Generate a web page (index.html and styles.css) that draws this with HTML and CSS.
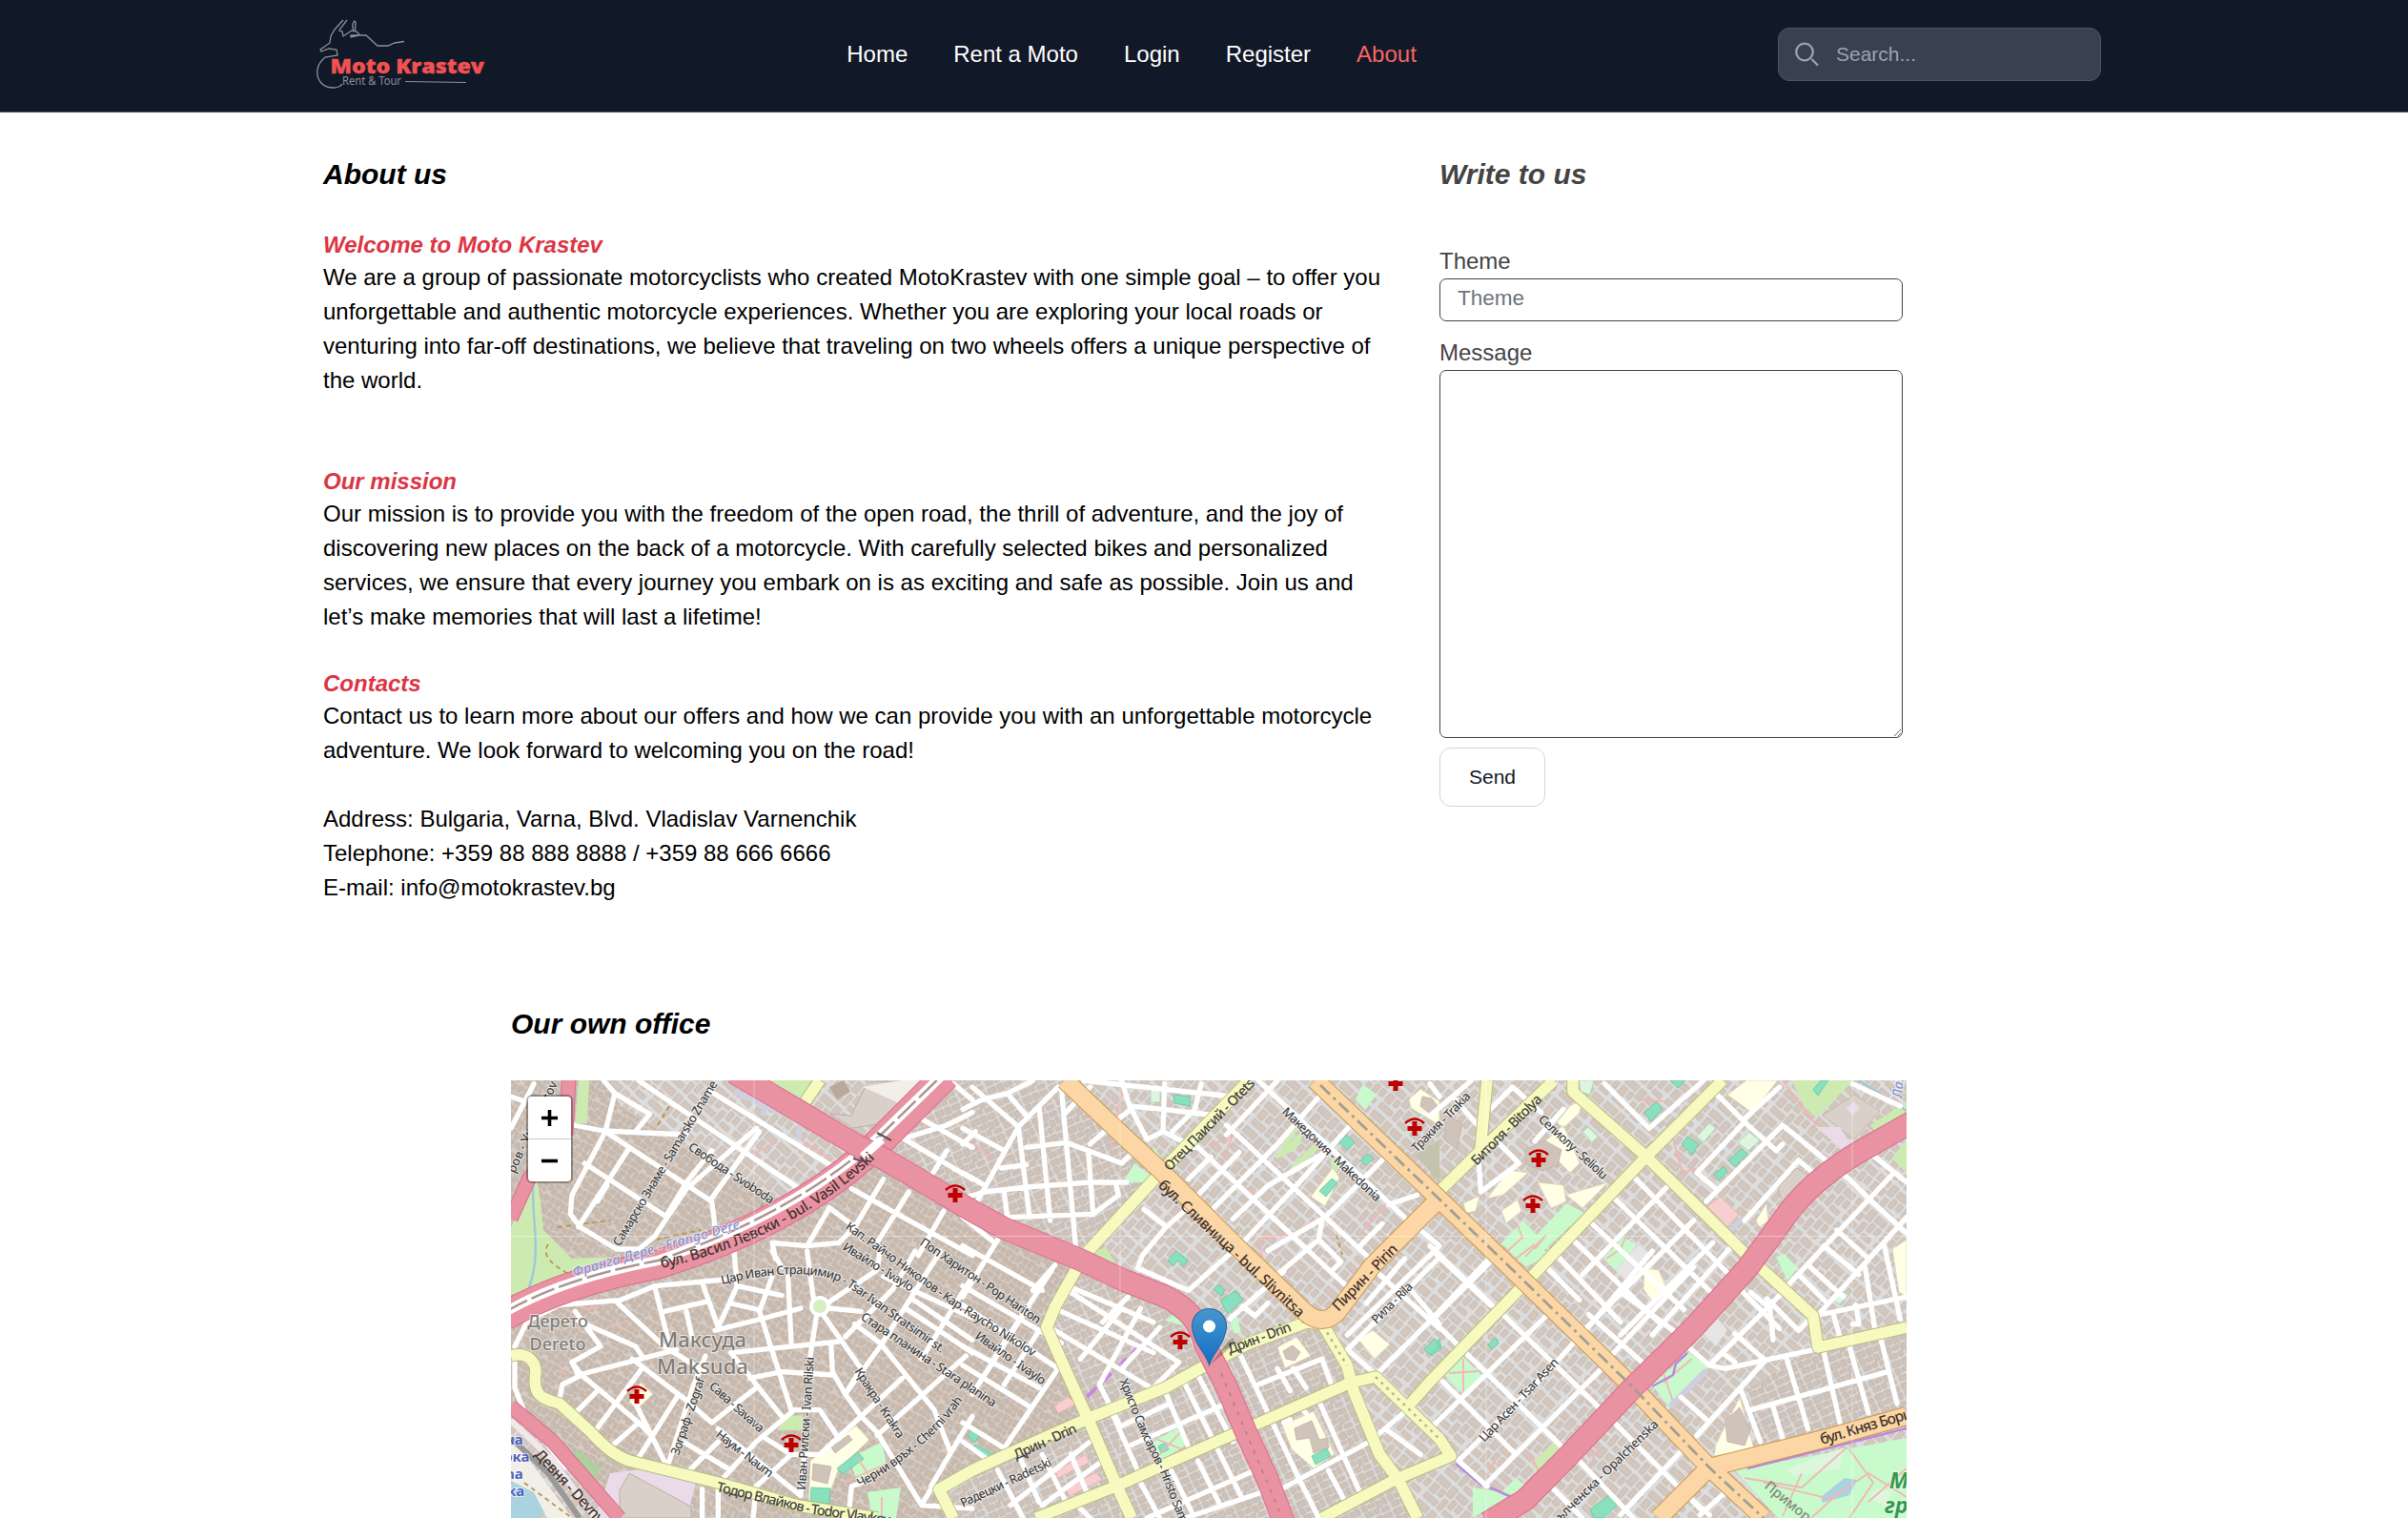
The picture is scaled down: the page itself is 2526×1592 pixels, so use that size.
FILE: index.html
```html
<!DOCTYPE html>
<html lang="en">
<head>
<meta charset="utf-8">
<title>Moto Krastev - About</title>
<link rel="stylesheet" href="styles.css">
</head>
<body>
<header class="header">
  <div class="header-inner">
    <a class="logo" aria-label="Moto Krastev">
      <svg width="180" height="84" viewBox="329 15 180 84">
        <g fill="none" stroke="#8d9096" stroke-width="1.3">
          <path d="M360 21L351 31L347 38L346 45L336 52L337 54L345 51L353 52L354 58L341 60L340 61C334 66 332 72 333 79C335 88 342 92 350 92C354 92 358 90 359 88"/>
          <path d="M364 21L357 30L356 32L359 33L360 38L366 34L369 32L374 33L376 35L377 37L368 39L368 37L384 37L396 48L407 48L414 45L424 43.500"/>
          <path d="M371 32C369 28 370 23 372 22C375 24 371 29 373 32"/>
          <path d="M425 85.500L489 86.500" stroke-width="1.200"/>
        </g>
        <text class="logo-name" x="346.500" y="76.500" textLength="161.500" lengthAdjust="spacingAndGlyphs">Moto Krastev</text>
        <text class="logo-sub" x="359" y="89" textLength="62" lengthAdjust="spacingAndGlyphs">Rent &amp; Tour</text>
      </svg>
    </a>
    <nav class="nav"><a>Home</a><a>Rent a Moto</a><a>Login</a><a>Register</a><a class="active">About</a></nav>
    <div class="search">
      <svg width="26" height="26" viewBox="0 0 26 26" fill="none" stroke="#9ca3af" stroke-width="2.200"><circle cx="10" cy="10.500" r="8.800"/><path d="M17.500 18L24 24.500"/></svg>
      <span>Search...</span>
    </div>
  </div>
</header>
<main>
  <div class="columns">
    <section class="about">
      <h2>About us</h2>
      <h3>Welcome to Moto Krastev</h3>
      <p>We are a group of passionate motorcyclists who created MotoKrastev with one simple goal – to offer you<br>unforgettable and authentic motorcycle experiences. Whether you are exploring your local roads or<br>venturing into far-off destinations, we believe that traveling on two wheels offers a unique perspective of<br>the world.</p>
      <h3 class="mission">Our mission</h3>
      <p>Our mission is to provide you with the freedom of the open road, the thrill of adventure, and the joy of<br>discovering new places on the back of a motorcycle. With carefully selected bikes and personalized<br>services, we ensure that every journey you embark on is as exciting and safe as possible. Join us and<br>let’s make memories that will last a lifetime!</p>
      <h3 class="contacts">Contacts</h3>
      <p>Contact us to learn more about our offers and how we can provide you with an unforgettable motorcycle<br>adventure. We look forward to welcoming you on the road!<br><br>Address: Bulgaria, Varna, Blvd. Vladislav Varnenchik<br>Telephone: +359 88 888 8888 / +359 88 666 6666<br>E-mail: info@motokrastev.bg</p>
    </section>
    <form class="write">
      <h2>Write to us</h2>
      <label for="theme">Theme</label>
      <input id="theme" type="text" placeholder="Theme">
      <label for="message">Message</label>
      <textarea id="message"></textarea>
      <button type="button">Send</button>
    </form>
  </div>
  <section class="office">
    <h2>Our own office</h2>
    <div class="map">
      <svg class="map-canvas" width="1464" height="459" viewBox="536 1133 1464 459">
        <defs>
          <pattern id="dense" width="26" height="22" patternUnits="userSpaceOnUse" patternTransform="rotate(28)">
            <rect width="26" height="22" fill="#d6cdc6"/>
            <path d="M1 1h6v4h-2v3H1zM9 1h4v5H9zM15 0h6v3h-2v4h-4zM22 2h3v7h-3zM1 11h4v6H1zM7 8h6v4H7zM15 9h4v5h-4zM20 11h5v4h-5zM6 14h5v6H6zM13 16h7v4h-7zM22 17h3v4h-3z" fill="#c9baae" stroke="#c0b0a4" stroke-width=".8"/>
          </pattern>
          <pattern id="grid45" width="44" height="34" patternUnits="userSpaceOnUse" patternTransform="rotate(42)">
            <rect width="44" height="34" fill="#dddddd"/>
            <path d="M2 2h15v7H2zM20 2h7v12h-7zM30 3h12v7H30zM3 12h7v10H3zM13 12h5v8h-5zM30 13h5v10h-5zM38 13h5v8h-5zM3 25h16v6H3zM22 18h5v13h-5zM30 27h11v5H30z" fill="#d3c7be" stroke="#c4b6ab" stroke-width=".8"/>
          </pattern>
          <pattern id="grid20" width="30" height="24" patternUnits="userSpaceOnUse" patternTransform="rotate(-24)">
            <rect width="30" height="24" fill="#dbd9d7"/>
            <path d="M1 1h9v6H1zM12 1h6v7h-6zM20 2h8v5h-8zM1 9h5v6H1zM8 10h7v4H8zM17 10h5v7h-5zM24 9h4v7h-4zM2 17h8v5H2zM12 17h5v5h-5zM20 19h8v4h-8z" fill="#cfc2b8" stroke="#c2b3a8" stroke-width=".8"/>
          </pattern>
          <linearGradient id="pin" x1="0" y1="0" x2="0" y2="1"><stop offset="0" stop-color="#4796cd"/><stop offset="1" stop-color="#126fc6"/></linearGradient>
          <g id="hospital"><path d="M-10 -5Q0 -14 10 -5" fill="none" stroke="#bf0000" stroke-width="2.400"/><path d="M-2.500 -7h5v5h5v5h-5v5h-5v-5h-5v-5h5z" fill="#bf0000"/></g>
        </defs>

        <!-- ground -->
        <rect x="536" y="1133" width="1464" height="459" fill="url(#grid45)"/>
        <path d="M536 1133H760L890 1205L820 1268L700 1310L600 1340L536 1360Z" fill="url(#dense)"/>
        <path d="M640 1133H775L900 1215L830 1265L740 1215L650 1160Z" fill="url(#grid45)"/>
        <path d="M536 1375L700 1335L830 1280L930 1215L1010 1268L1130 1320L1098 1392L1143 1490L990 1560L1000 1592H640L536 1475Z" fill="url(#dense)"/>
        <path d="M960 1133H1117L1215 1240L1135 1320L1010 1265L935 1205Z" fill="url(#grid20)"/>
        <path d="M1135 1320L1250 1375L1270 1430L1143 1487L1098 1392ZM1143 1487L1270 1430L1340 1592H1187ZM1010 1550L1143 1490L1187 1592H990ZM1285 1415L1387 1388L1487 1592H1350Z" fill="url(#grid20)"/>
        <path d="M1905 1412L2000 1392V1490L1850 1525L1830 1460Z" fill="url(#grid20)"/>

        <!-- land use -->
        <g fill="#cdebb0">
          <path d="M536 1287L563 1235L567 1260L570 1290L600 1320L640 1318L600 1334L536 1358Z"/>
          <path d="M607 1133H618L616 1178H603Z"/><path d="M800 1133H850L842 1152Z"/>
          <path d="M590 1532L605 1520L630 1540L625 1550L640 1592L600 1545Z" fill="#add19e"/>
          <path d="M815 1500L826 1485L842 1484V1500Z"/><path d="M1350 1190L1366 1178L1340 1215ZM1337 1213L1372 1180L1360 1205L1340 1215Z"/>
          <path d="M1353 1225L1378 1200L1383 1205L1358 1229ZM1395 1213L1408 1222L1398 1232ZM1140 1318L1160 1308L1170 1325L1150 1335Z"/>
          <path d="M1880 1133L1945 1133L1905 1172L1892 1160ZM1962 1180L2000 1155V1166L1970 1190ZM1985 1215L2000 1195V1230Z"/>
          <path d="M1610 1532L1630 1512L1635 1522L1610 1545Z"/>
        </g>
        <g fill="#c8facc">
          <path d="M1422 1153L1430 1137L1444 1148L1432 1164ZM1178 1240L1190 1220L1210 1235L1198 1240ZM1208 1200L1217 1212L1214 1218Z"/>
          <path d="M1575 1304L1598 1280L1612 1295L1643 1262L1662 1272L1602 1328Z"/><path d="M1682 1320L1703 1297L1717 1306L1695 1332Z"/>
          <path d="M1863 1318L1872 1315L1886 1330L1875 1343Z"/><path d="M1515 1442L1535 1423L1556 1444L1535 1462Z"/>
          <path d="M1733 1452L1772 1418L1792 1434L1750 1475Z"/><path d="M1820 1542L2000 1508V1592H1865Z"/>
          <path d="M1210 1512L1235 1498L1245 1515L1215 1534Z"/><path d="M1583 1312L1640 1312L1600 1328Z"/>
          <path d="M1222 1385L1230 1380L1250 1388L1240 1390ZM1290 1385L1298 1382L1302 1398L1294 1398Z"/>
          <path d="M890 1530L925 1512L930 1535L900 1555ZM910 1565L945 1560L940 1592H915Z"/>
          <path d="M1545 1560L1575 1565L1590 1550L1600 1558L1545 1592Z"/>
        </g>
        <g fill="#ffffe5" stroke="#d9cfb2" stroke-width=".7">
          <path d="M1478 1153L1490 1142L1510 1155V1180L1480 1162Z"/><path d="M1812 1148L1832 1133H1865L1838 1167Z"/>
          <path d="M1375 1255L1398 1225L1405 1235L1390 1265Z"/><path d="M1340 1413L1360 1402L1375 1422L1348 1435Z"/>
          <path d="M1345 1495L1378 1480L1400 1525L1378 1540L1355 1520Z"/><path d="M850 1532L898 1495L912 1510L880 1540L865 1580L848 1580Z"/>
          <path d="M660 1470L672 1450L685 1462L668 1478Z"/>
          <path d="M1583 1227L1603 1230L1577 1253L1560 1257ZM1613 1240L1640 1243L1643 1260L1627 1267ZM1633 1177L1647 1160L1660 1153L1657 1167L1640 1183ZM1643 1253L1687 1240L1660 1267ZM1617 1200L1640 1180L1657 1220L1647 1230ZM1535 1262L1552 1254L1548 1270L1538 1272ZM1575 1270L1592 1258L1596 1270L1580 1283Z"/>
          <path d="M1725 1330L1740 1332L1748 1350L1735 1367L1724 1352Z"/><path d="M1800 1515L1825 1465L1840 1520L1798 1527Z"/>
          <path d="M1985 1310L2000 1300V1360L1992 1355Z"/><path d="M1425 1405L1440 1395L1458 1410L1442 1425Z"/><path d="M1842 1280L1853 1262L1855 1280L1846 1287Z"/>
        </g>
        <g fill="#d0c3b9" stroke="#bfb0a5" stroke-width=".8">
          <path d="M1346 1417L1356 1411L1364 1418L1358 1427L1349 1425ZM1358 1498L1376 1490L1384 1510L1392 1508L1394 1518L1378 1524L1374 1508L1360 1510ZM1825 1476L1836 1500L1830 1516L1812 1512L1810 1490ZM1492 1150L1502 1152L1508 1160L1500 1168L1490 1160ZM1600 1206L1620 1196L1638 1206L1634 1222L1618 1228L1600 1220ZM872 1518L890 1505L894 1510L876 1524ZM853 1535L872 1538L868 1556L852 1552ZM1516 1170L1534 1178L1528 1206L1516 1194Z"/>
        </g>
        <path d="M625 1592L640 1545L680 1540L730 1555L720 1592Z" fill="#ebdbe8"/>
        <path d="M650 1563L660 1545L725 1580V1592H650Z" fill="#d9d0c9" stroke="#bfb0a5"/>
        <path d="M893 1170L910 1135L985 1133L925 1178L895 1183L870 1168Z" fill="#d9d0c9" stroke="#bfb0a5"/>
        <path d="M905 1140L945 1133H980L950 1160Z" fill="#f2efe9"/>
        <path d="M870 1140L885 1133L892 1145L878 1153Z" fill="#b9a99c"/>
        <path d="M1865 1245L1885 1225L1907 1240L1872 1270Z" fill="#d9d0c9" stroke="#c5b8ad"/>
        <path d="M1912 1170L1945 1148L1972 1165L1945 1195Z" fill="#d9d0c9" stroke="#c5b8ad"/>
        <path d="M1905 1182L1930 1182L1940 1198L1932 1205ZM1937 1162L1945 1155L1951 1163L1943 1170Z" fill="#ebdbe8"/>
        <path d="M1485 1212L1510 1195V1240Z" fill="#c4c3ad"/>
        <path d="M1695 1332L1718 1306L1732 1316L1704 1342ZM1780 1392L1795 1375L1812 1395L1800 1412Z" fill="#e6e6e6"/>
        <path d="M536 1555L562 1558L573 1582L565 1592H536Z" fill="#aad3df"/>
        <path d="M536 1505L600 1592H574L560 1565L536 1553Z" fill="#f2efe9"/>
        <path d="M1910 1570L1935 1550L1948 1552L1940 1568L1912 1576Z" fill="#aad3df"/>
        <path d="M1875 1540L1935 1518L1930 1540L1880 1548ZM1960 1570L1972 1560L1985 1565L1978 1580Z" fill="#def6de"/>
        <g fill="#f7cfcf" stroke="#e8b5b5"><path d="M1107 1542L1140 1525L1142 1534L1110 1550ZM1117 1560L1150 1544L1156 1552L1122 1569ZM1106 1475L1120 1465L1130 1472L1110 1482Z"/><path d="M1791 1265L1805 1255L1824 1274L1812 1287Z"/></g>
        <g fill="#88e0be" stroke="#63c79d" stroke-width=".8">
          <path d="M1231 1148L1248 1150L1249 1160L1232 1157ZM1405 1198L1413 1190L1421 1198L1413 1206ZM1384 1249L1397 1236L1403 1240L1391 1255ZM1427 1217L1435 1210L1441 1215L1433 1222Z"/>
          <path d="M1225 1322L1234 1312L1246 1321L1242 1328L1235 1322L1231 1328ZM1280 1364L1296 1354L1304 1363L1288 1378ZM1273 1352L1278 1347L1285 1353L1281 1359Z"/>
          <path d="M1725 1167L1738 1155L1744 1163L1732 1176ZM1764 1200L1770 1192L1782 1200L1775 1211ZM1813 1217L1827 1205L1833 1210L1820 1224ZM1798 1232L1808 1223L1812 1229L1803 1238Z"/>
          <path d="M1902 1143L1910 1133H1918L1907 1149ZM1752 1133H1768L1760 1141ZM1500 1415L1510 1404L1512 1414L1502 1422ZM1561 1410L1569 1403L1572 1409L1565 1415Z"/>
          <path d="M1376 1527L1392 1519L1396 1527L1380 1536ZM1494 1415L1505 1404L1510 1412L1500 1421ZM1668 1583L1688 1568L1697 1578L1682 1592H1672Z"/>
          <path d="M878 1540L900 1523L906 1530L884 1546ZM851 1560L871 1561L870 1577L850 1575ZM1015 1505L1024 1496L1030 1502L1022 1513ZM1023 1515L1041 1525L1037 1529L1021 1518ZM1215 1517L1222 1513L1226 1520L1218 1524Z"/>
        </g>
        <g fill="#def6de" stroke="#9ed8b5" stroke-width=".8"><path d="M1207 1141L1217 1140V1156H1207ZM1823 1198L1835 1187L1846 1196L1834 1207ZM1780 1192L1793 1178L1800 1183L1787 1198ZM1660 1187L1666 1182L1676 1192L1670 1198ZM1656 1133H1672L1668 1148L1658 1145ZM1923 1363L1932 1354L1939 1358L1930 1368Z"/></g>
        <g fill="none" stroke="#f4b5b5" stroke-width="1.800">
          <path d="M1580 1313L1597 1298L1592 1285M1600 1318L1622 1295L1610 1310M1590 1320L1610 1305M1685 1320L1700 1310L1705 1298M1520 1440L1550 1438M1535 1425V1460M1212 1530L1240 1500M1215 1510L1245 1522M1745 1450L1775 1425M1745 1440L1755 1470"/>
          <path d="M1830 1550L1890 1560L1935 1520M1850 1555L1920 1572L1960 1545L2000 1570M1890 1545L1870 1590M1940 1520L1965 1555L1940 1592M1960 1575L2000 1540M1900 1592L1930 1565"/>
          <path d="M1268 1202L1292 1192L1283 1218M1378 1280L1360 1292L1320 1300L1325 1325M1430 1290L1455 1262M1755 1195L1765 1230L1780 1225M1720 1153L1745 1155M1870 1133L1905 1180M885 1555L930 1535M900 1530L920 1560M925 1570V1592M1320 1255L1305 1245M1022 1200L1040 1215M640 1392L660 1385M585 1437L595 1442M613 1373L628 1371"/>
          <path d="M1562 1545L1567 1533L1575 1540M1605 1525L1615 1545L1600 1555M1670 1530L1680 1515M1685 1455L1692 1450M1165 1205L1180 1130M790 1210L815 1198M840 1195L870 1215"/>
        </g>
        <path d="M560 1235C555 1270 570 1310 555 1350M604 1140L600 1180M1950 1133L2000 1165" fill="none" stroke="#9fc9d8" stroke-width="2.500"/>
        <path d="M770 1145L905 1205M801 1158V1170M838 1180V1195M1815 1290L1830 1277M1752 1475L1790 1437" fill="none" stroke="#cfcfdf" stroke-width="6"/>
        <path d="M1140 1465L1213 1395" fill="none" stroke="#c987e2" stroke-width="4" stroke-dasharray="14 8"/>
        <path d="M1733 1454L1755 1442L1758 1430L1770 1419M1833 1540L2000 1498M1527 1535L1555 1558M1563 1560L1590 1572" fill="none" stroke="#b98ae0" stroke-width="2.500"/>
        <path d="M575 1305C565 1320 590 1332 600 1338M585 1287L640 1280M680 1302L735 1290M690 1180L705 1155M795 1275L803 1255M550 1555L600 1592M1402 1295L1408 1316" fill="none" stroke="#b8954c" stroke-width="1.800" stroke-dasharray="5 4"/>

        <!-- residential streets, one group per map quarter -->
        <g class="streets" transform="translate(520 1040) scale(.33333)">
          <path d="M48 430L120 290M48 330L90 345M245 420L340 438L600 450M340 280L375 320L485 385L440 440M375 320L345 440L240 640L235 700L265 740L380 810L450 810L500 770L600 620L820 430M450 280L970 630M670 310L1060 550L1080 530M345 440L680 660L690 740M415 500L260 740M280 540L540 710M320 660L350 610M540 700L600 600L680 500M680 650L830 440"/>
          <path d="M1500 380L1420 420L1290 460M1340 400L1500 490M1280 460L1500 590M1420 500L1370 580M1440 290L1500 340M1120 620L1500 830M1220 590L1130 740M1300 630L1200 790M1410 690L1330 830M1050 680L1130 740L1080 790L980 800L870 790L880 840M1050 680L980 800"/>
        </g>
        <g class="streets" transform="translate(1010 1120) scale(.33333)">
          <path d="M0 130L60 100L140 80L220 40M30 60L175 185L40 430M140 80L200 150M0 190L130 260M0 240L40 200M300 60L175 185L210 470M240 120L275 480M310 60L325 230L355 560M120 315L200 305M200 250L325 235L395 260L500 300M395 260L410 460M0 410L70 390L200 375L400 360L515 360M480 360L490 400L410 460L140 470L130 390M0 330L70 370M325 140L400 60M400 240L480 170M500 40L525 120L580 225L630 200L635 50M380 40L850 90M525 120L630 130L800 150M750 50L730 130L660 200M450 190L530 130M500 300L530 270M730 250L630 200"/>
          <path d="M930 40L1390 470M830 180L1270 590M740 250L1200 680M570 445L640 500L565 590L550 630L710 700L890 540L1050 370L1220 180M640 500L720 430M710 350L780 280M730 410L870 265M790 440L990 240L1130 80M850 475L960 370L1150 260M960 575L1140 470L1320 290M990 650L1120 540L1130 480M830 210L990 40M0 470L100 550M1120 540L1190 610L1160 640M1340 430L1430 400M1250 560L1320 490M1440 510L1500 560M0 560L250 700M110 540L0 720M290 620L220 700M340 690L600 800M520 720L440 800M840 790L1010 640M880 750L920 780L960 740M1270 740L1390 600M1210 840L1500 560M1300 640L1500 820"/>
        </g>
        <g class="streets" transform="translate(1500 1120) scale(.33333)">
          <path d="M0 150L130 40M0 50L30 90M80 100L150 180M190 130L260 60L350 140M200 220L280 300L160 390L150 240M330 230L420 130M550 50L690 190L860 40M900 80L990 170L840 330L900 380M990 160L1100 60M990 170L1090 260L1110 240M870 420L1110 180L1320 350L1380 410L1500 520M990 480L1160 290L1230 350M1330 50L1480 120M1400 280L1500 360"/>
          <path d="M640 340L970 680M570 400L920 740M510 490L800 760M450 540L720 800M400 590L600 800M370 630L470 730M750 370L480 650M830 480L480 830M890 550L600 840M950 560L700 840M1460 330L1130 680M1280 510L1380 600M1240 560L1350 650M1190 620L1300 720M1160 650L1250 740M1500 470L1210 790M1370 630L1400 820M1430 560L1480 790M1210 780L1500 720M980 700L1100 820M0 560L220 770M0 800L200 600"/>
        </g>
        <g class="streets" transform="translate(520 1312) scale(.33333)">
          <path d="M60 300L100 220L200 170L390 155L500 110L720 90M60 330L60 430L100 530L220 680M250 190L330 300L240 350L260 390L570 310M260 220L440 300L460 330M380 160L530 300L660 380M500 110L545 290M690 250L850 210L960 180M530 190L660 160M600 190L620 280M650 100L700 240L760 110L750 0M760 110L900 140M740 165L830 185M870 80L830 190L930 500M920 80L930 290M980 0L1000 150M870 0L900 50M1050 180L1150 190M1010 200L990 330M1030 200L1150 370L1100 450M1080 285L740 320M1055 290L1060 380L1100 450L1150 520L1200 570M800 400L900 380L1060 390M1050 160L1200 60L1210 0M1100 270L1250 120L1320 0M740 320L900 520"/>
          <path d="M200 470L210 420L270 390L450 540L490 580L540 680L620 430L660 330M270 390L240 350M250 510L320 440M310 570L460 370M370 610L450 540M450 650L570 460M490 580L440 480M430 340L600 470L680 540L820 430M590 600L740 690M610 690L700 600M720 710L820 600L940 500L1020 500L1080 590M850 590L930 640L1020 640L1150 520L1280 400M820 740L930 640M700 560L960 770L970 640M820 740L810 840M700 740V840M650 750V840M1150 730L1120 740L1110 840M1100 450L1210 300L1400 0M1130 230L1210 290L1380 500L1430 630M1200 580L1480 330M1370 740L1500 520M1310 150L1500 280M1290 180L1500 320M1340 800L1500 810M1200 570L1340 800L1375 740M1220 80L1500 210M1500 80L1340 340"/>
        </g>
        <g class="streets" transform="translate(1010 1312) scale(.33333)">
          <path d="M0 110L120 180L310 290M0 170L300 370M0 300L240 430M0 360L210 490M210 170L30 450M280 60L90 350M300 370L130 620L0 540M240 250L130 420M0 600L70 650M310 190L600 320M290 250L590 430M560 180L430 420L490 540M500 180L370 340M620 240L500 370M340 130L680 350L590 440M640 450L720 640M700 420L800 620L880 780M740 390L850 600M500 550L650 480M530 610L830 480M470 510L550 690M560 730L620 840M640 660L720 820M740 660L810 800M580 840L920 690M700 840L940 760M110 690L190 840M180 650L240 790M250 640L330 800M150 800L400 600M250 800L440 660"/>
          <path d="M870 320L1060 720L1120 840M930 420L1130 340L1160 420M990 370L1030 440M1040 370L1080 430M1010 540L1030 530M1080 510L1070 500M1120 470L1250 760M1000 750L1280 600L1410 490M1150 690L1210 800M1330 560L1440 640M1210 310L1500 20M1210 310L1300 390L1500 190M1400 110L1500 230M340 640L390 760M350 790L400 840"/>
        </g>
        <g class="streets" transform="translate(1500 1312) scale(.33333)">
          <path d="M0 220L180 30M20 10L190 170M0 210L430 630M30 400L270 640M230 200L540 500M90 660L380 370L460 280M0 560L370 200M180 730L570 340M490 250L700 0M570 330L830 50M600 130L780 260M90 660L180 740M500 200L690 370M580 540L740 700L860 820M470 660L640 840M390 750L480 840M600 830L800 620M790 460L870 530M840 580L1050 350M810 300L880 360L930 370L1000 355L1210 310M880 360L1130 110M920 320L960 350M1010 130L1070 180L1080 280M960 260L1050 340M1060 150L1160 250L1200 210M980 440L1040 600M1010 500L1440 380M1120 330L1190 560M1240 320L1290 540M1320 300L1380 510M1420 280L1470 480M1080 490L1110 590M810 770L880 830M850 830L940 750M1340 170L1350 230L1330 230M1270 200L1290 270"/>
        </g>
        <circle cx="860" cy="1370" r="9" fill="#d2eec2" stroke="#fff" stroke-width="4"/>

        <!-- tertiary roads -->
        <g class="tertiary">
          <g id="tertiary">
            <path d="M1310 1133L1217 1230L1137 1317L1107 1370L1098 1392L1117 1435L1143 1492L1170 1555L1187 1592"/>
            <path d="M1000 1592L985 1562L1020 1542L1053 1527L1143 1487L1223 1455L1270 1429L1310 1409L1370 1387L1387 1388L1413 1432L1420 1459L1447 1525L1467 1552L1487 1592"/>
            <path d="M1087 1592L1170 1559L1237 1529L1317 1494L1417 1450L1443 1444L1510 1509L1522 1527L1463 1552L1387 1592"/>
            <path d="M1477 1475L1500 1449L1597 1349L1727 1213L1807 1133"/>
            <path d="M1650 1133V1145L1727 1213L1833 1317L1902 1380L1907 1413L2000 1392"/>
            <path d="M1630 1133L1557 1203L1505 1254M1560 1133L1553 1205M845 1155L860 1133"/>
            <path d="M536 1422C555 1417 562 1430 562 1439C558 1465 570 1467 587 1472L620 1502Q640 1525 660 1532L753 1555L837 1579L920 1592"/>
          </g>
        </g>
        <use href="#tertiary" class="tertiary-fill"/>
        <path d="M1310 1133L1217 1230L1137 1317L1107 1370L1098 1392L1117 1435L1143 1492L1170 1555L1187 1592M1000 1592L985 1562L1020 1542L1053 1527L1143 1487L1223 1455L1270 1429L1310 1409L1370 1387L1387 1388L1413 1432L1420 1459L1447 1525L1467 1552L1487 1592" class="tertiary-fill"/>
        <path d="M1365 1386L1387 1389L1413 1432M1443 1444L1510 1509" fill="none" stroke="#b4b896" stroke-width="2.500" stroke-dasharray="3 5"/>

        <!-- secondary roads -->
        <g fill="none" stroke-linejoin="round">
          <path d="M1117 1133L1177 1190L1217 1227L1297 1307L1370 1377Q1387 1391 1402 1377L1440 1327L1510 1257M1380 1133L1505 1253L1587 1332L1713 1455L1793 1539L1850 1592M1740 1592L1793 1539L1917 1508L2000 1485" stroke="#c69a55" stroke-width="20"/>
          <path d="M1117 1133L1177 1190L1217 1227L1297 1307L1370 1377Q1387 1391 1402 1377L1440 1327L1510 1257M1380 1133L1505 1253L1587 1332L1713 1455L1793 1539L1850 1592M1740 1592L1793 1539L1917 1508L2000 1485" stroke="#fcd6a4" stroke-width="18"/>
        </g>

        <!-- trunk roads and railway -->
        <g fill="none" stroke-linejoin="round">
          <path d="M597 1126L594 1185Q585 1205 555 1236L536 1278M536 1475L580 1512L650 1592" stroke="#dc6d8f" stroke-width="15.500"/>
          <path d="M597 1126L594 1185Q585 1205 555 1236L536 1278M536 1475L580 1512L650 1592" stroke="#e892a2" stroke-width="13.500"/>
          <path d="M530 1380Q590 1345 690 1326Q840 1280 925 1195L992 1128" stroke="#dc6d8f" stroke-width="31"/>
          <path d="M530 1380Q590 1345 690 1326Q840 1280 925 1195L992 1128" stroke="#e892a2" stroke-width="29"/>
          <path d="M530 1376Q590 1341 690 1322Q835 1272 922 1192L990 1126" stroke="#fff" stroke-width="10"/>
          <path d="M530 1376Q590 1341 690 1322Q835 1272 922 1192L990 1126" stroke="#ad9392" stroke-width="2.500" stroke-dasharray="26 5"/>
          <path d="M536 1490L580 1532L625 1592" stroke="#f1e9e9" stroke-width="6"/>
          <path d="M536 1508L575 1545L608 1592" stroke="#999" stroke-width="6"/>
          <path d="M770 1125L897 1200L930 1217L1020 1270L1053 1288L1133 1321L1177 1342L1223 1360Q1258 1378 1264 1410L1287 1455L1307 1502L1330 1552L1347 1597M2010 1174L1947 1210Q1895 1242 1870 1280L1833 1330L1777 1392L1713 1455L1647 1525L1600 1573L1560 1597" stroke="#dc6d8f" stroke-width="24"/>
          <path d="M770 1125L897 1200L930 1217L1020 1270L1053 1288L1133 1321L1177 1342L1223 1360Q1258 1378 1264 1410L1287 1455L1307 1502L1330 1552L1347 1597M2010 1174L1947 1210Q1895 1242 1870 1280L1833 1330L1777 1392L1713 1455L1647 1525L1600 1573L1560 1597" stroke="#e892a2" stroke-width="22"/>
          <path d="M1281 1440L1307 1502L1342 1585" stroke="#bb7b8b" stroke-width="1.600" stroke-dasharray="4 7"/>
          <path d="M905 1213L925 1195" stroke="#fff" stroke-width="9"/><path d="M895 1215L905 1218M920 1188L935 1196" stroke="#555" stroke-width="2"/>
          <path d="M1385 1138L1505 1253L1587 1332L1713 1455L1793 1539L1850 1592" stroke="#a0a090" stroke-width="2.800" stroke-dasharray="14 5 3 5"/>
        </g>

        <use href="#hospital" x="1002" y="1253"/><use href="#hospital" x="1464" y="1136"/><use href="#hospital" x="1484" y="1183"/><use href="#hospital" x="1614" y="1216"/><use href="#hospital" x="1608" y="1264"/><use href="#hospital" x="668" y="1464"/><use href="#hospital" x="830" y="1515"/><use href="#hospital" x="1238" y="1407"/>

        <!-- street name baselines -->
        <defs>
          <path id="l1" d="M650 1308L754 1135"/><path id="l2" d="M721 1205L810 1264"/><path id="l3" d="M694 1330Q830 1300 921 1212"/><path id="l4" d="M602 1339L778 1288"/>
          <path id="l5" d="M886 1288L997 1368L1085 1424"/><path id="l6" d="M883 1310L957 1356"/><path id="l7" d="M964 1305L1090 1390"/><path id="l8" d="M1022 1403L1095 1454"/>
          <path id="l9" d="M902 1383L1043 1477"/><path id="l10" d="M757 1347Q850 1325 887 1348L987 1419"/><path id="l11" d="M896 1438L943 1511"/><path id="l12" d="M902 1560Q975 1520 1012 1465"/>
          <path id="l13" d="M845 1563L854 1422"/><path id="l14" d="M712 1527L740 1445"/><path id="l15" d="M743 1455L798 1504"/><path id="l16" d="M750 1506L808 1551"/>
          <path id="l17" d="M751 1564L853 1588L940 1600"/><path id="l18" d="M560 1526L635 1607"/><path id="l21" d="M1066 1531L1132 1501"/><path id="l22" d="M1010 1581L1106 1536"/>
          <path id="l23" d="M1174 1448L1197 1504L1217 1544L1252 1632"/><path id="l24" d="M1290 1420L1357 1395"/><path id="l25" d="M1214 1244L1364 1384"/><path id="l26" d="M1227 1229L1318 1136"/>
          <path id="l27" d="M1404 1376L1468 1310"/><path id="l28" d="M1444 1389L1484 1349"/><path id="l29" d="M1344 1167L1445 1262"/><path id="l30" d="M1486 1209L1545 1149"/>
          <path id="l31" d="M1549 1223L1619 1153"/><path id="l32" d="M1613 1175L1683 1239"/><path id="l33" d="M1557 1513L1637 1428"/><path id="l34" d="M1625 1608L1742 1493"/>
          <path id="l35" d="M1911 1515L2030 1480"/><path id="l36" d="M1850 1560L1920 1617"/>
        </defs>
        <g class="labels">
          <text textLength="200"><textPath href="#l1">Самарско Знаме - Samarsko Zname</textPath></text>
          <text textLength="105"><textPath href="#l2">Свобода - Svoboda</textPath></text>
          <text class="river" textLength="182"><textPath href="#l4">Франга Дере - Frango Dere</textPath></text>
          <text class="major" textLength="255"><textPath href="#l3">бул. Васил Левски - bul. Vasil Levski</textPath></text>
          <text textLength="239"><textPath href="#l5">Кап. Райчо Николов - Kap. Raycho Nikolov</textPath></text>
          <text textLength="85"><textPath href="#l6">Ивайло - Ivaylo</textPath></text>
          <text textLength="150"><textPath href="#l7">Поп Харитон - Pop Hariton</textPath></text>
          <text textLength="87"><textPath href="#l8">Ивайло - Ivaylo</textPath></text>
          <text textLength="168"><textPath href="#l9">Стара планина - Stara planina</textPath></text>
          <text textLength="256"><textPath href="#l10">Цар Иван Страцимир - Tsar Ivan Stratsimir st.</textPath></text>
          <text textLength="85"><textPath href="#l11">Кракра - Krakra</textPath></text>
          <text textLength="143"><textPath href="#l12">Черни връх - Cherni vrah</textPath></text>
          <text textLength="140"><textPath href="#l13">Иван Рилски - Ivan Rilski</textPath></text>
          <text textLength="85"><textPath href="#l14">Зограф - Zograf</textPath></text>
          <text textLength="72"><textPath href="#l15">Сава - Savava</textPath></text>
          <text textLength="72"><textPath href="#l16">Наум - Naum</textPath></text>
          <text class="mid" textLength="186"><textPath href="#l17">Тодор Влайков - Todor Vlaykov</textPath></text>
          <text class="major" textLength="108"><textPath href="#l18">Девня - Devnya</textPath></text>
          <text class="mid" textLength="71"><textPath href="#l21">Дрин - Drin</textPath></text>
          <text textLength="104"><textPath href="#l22">Радецки - Radetski</textPath></text>
          <text textLength="192"><textPath href="#l23">Христо Самсаров - Hristo Samsarov</textPath></text>
          <text class="mid" textLength="70"><textPath href="#l24">Дрин - Drin</textPath></text>
          <text class="major" textLength="203"><textPath href="#l25">бул. Сливница - bul. Slivnitsa</textPath></text>
          <text class="mid" textLength="129"><textPath href="#l26">Отец Паисий - Otets</textPath></text>
          <text class="major" textLength="91"><textPath href="#l27">Пирин - Pirin</textPath></text>
          <text textLength="55"><textPath href="#l28">Рила - Rila</textPath></text>
          <text textLength="137"><textPath href="#l29">Македония - Makedonia</textPath></text>
          <text textLength="82"><textPath href="#l30">Тракия - Trakia</textPath></text>
          <text class="mid" textLength="98"><textPath href="#l31">Битоля - Bitolya</textPath></text>
          <text textLength="93"><textPath href="#l32">Селиолу - Seliolu</textPath></text>
          <text textLength="115"><textPath href="#l33">Цар Асен - Tsar Asen</textPath></text>
          <text textLength="162"><textPath href="#l34">Опълченска - Opalchenska</textPath></text>
          <text class="major" textLength="114"><textPath href="#l35">бул. Княз Борис I</textPath></text>
          <text class="mid pale" textLength="82"><textPath href="#l36">Приморски</textPath></text>
          <text transform="translate(540 1231) rotate(-66)">ров - Ук</text>
          <text transform="translate(577 1154) rotate(-66)">tov</text>
          <text class="river" transform="translate(1995 1152) rotate(-86)">Лаз</text>
          <g class="place"><text x="585" y="1392">Дерето</text><text x="585" y="1416">Dereto</text><text class="big" x="737" y="1413">Максуда</text><text class="big" x="737" y="1441">Maksuda</text></g>
          <g class="station"><text x="530" y="1515">на</text><text x="528" y="1533">рка</text><text x="530" y="1551">na</text><text x="532" y="1569">ka</text></g>
          <g class="park"><text x="1982" y="1561">Мо</text><text x="1977" y="1587">гра</text></g>
        </g>
        <path d="M791 1133V1592M1175 1133V1592M1559 1133V1592M1943 1133V1592M536 1296.500H2000" stroke="#fff" stroke-opacity=".4"/>

        <!-- office pin -->
        <path d="M1270 1431L1288 1407Q1298 1398 1292 1412Z" fill="#000" opacity=".25"/>
        <path d="M1268.500 1431.500C1265 1419 1250.500 1407 1250.500 1390.500A18 18 0 0 1 1286.500 1390.500C1286.500 1407 1272 1419 1268.500 1431.500Z" fill="url(#pin)" stroke="#2e6da4" stroke-width="1.200"/>
        <circle cx="1268.500" cy="1391" r="6.500" fill="#fff"/>
      </svg>
      <div class="zoom"><a><svg width="17" height="17" viewBox="0 0 17 17"><path d="M0 8.500H17M8.500 0V17"/></svg></a><a><svg width="17" height="17" viewBox="0 0 17 17"><path d="M0 8.500H17"/></svg></a></div>
    </div>
  </section>
</main>
</body>
</html>
```
FILE: styles.css
```css
* { box-sizing: border-box; }
html, body { height: 100%; }
body {
  margin: 0;
  overflow: hidden;
  background: #fff;
  color: #000;
  font-family: "Liberation Sans", Arial, sans-serif;
  font-size: 24px;
  line-height: 36px;
}
.header { height: 118px; background: #111827; border-bottom: 1px solid #4b5563; }
.header-inner {
  display: flex;
  justify-content: space-between;
  align-items: center;
  height: 114px;
  margin: 0 322px 0 329px;
}
.logo { display: flex; width: 180px; }
.logo-name { font: 800 20.5px "Open Sans", sans-serif; fill: #f05252; stroke: #f05252; stroke-width: .4px; }
.logo-sub { font: 12.5px "Noto Sans", sans-serif; fill: #8d9096; }
.nav { display: flex; gap: 48px; color: #fff; }
.nav .active { color: #f56565; }
.search {
  display: flex;
  align-items: center;
  gap: 17px;
  width: 339px;
  height: 56px;
  padding: 0 17px;
  background: #394150;
  border: 1px solid #4b5563;
  border-radius: 12px;
  color: #9ca3af;
  font-size: 21px;
}
.columns { display: flex; padding: 47px 0 0 339px; }
.about { width: 1171px; }
h2, h3 { margin: 0; font-weight: bold; font-style: italic; }
h2 { height: 36px; font-size: 30px; line-height: 36px; }
h3 { height: 31px; font-size: 24px; line-height: 29px; color: #dc3545; }
p { margin: 0; }
.about h2 { margin-bottom: 41px; }
.about .mission { margin-top: 73px; }
.about .contacts { margin-top: 37px; }
.write { display: flex; flex-direction: column; width: 486px; color: #444; }
.write h2 { margin-bottom: 54px; }
.write label { height: 37px; line-height: 38px; }
.write input, .write textarea {
  width: 100%;
  margin: 0;
  padding: 0 18px;
  border: 1px solid #444;
  border-radius: 7px;
  background: #fff;
  font-family: inherit;
  font-size: 22.5px;
  outline: 0;
}
.write input { height: 45px; margin-bottom: 14px; padding-bottom: 3px; }
.write input::placeholder { color: #6c757d; opacity: 1; }
.write textarea { height: 386px; resize: vertical; }
.write button {
  width: 111px;
  height: 62px;
  margin-top: 10px;
  border: 1px solid #d1d5db;
  border-radius: 12px;
  background: #fff;
  color: #111827;
  font-family: inherit;
  font-size: 21px;
}
.office { width: 1464px; margin: 107px 0 0 536px; }
.office h2 { margin-bottom: 41px; }
.map { position: relative; height: 459px; overflow: hidden; }
.map-canvas { display: block; }
.streets { fill: none; stroke: #fff; stroke-width: 16; stroke-linejoin: round; stroke-linecap: round; }
.tertiary { fill: none; stroke: #b9bd80; stroke-width: 13.5; stroke-linejoin: round; }
.tertiary-fill { fill: none; stroke: #f7fabf; stroke-width: 11.5; stroke-linejoin: round; }
.tertiary #tertiary { stroke: inherit; }
.labels text {
  font-family: "Noto Sans", sans-serif;
  font-size: 13px;
  font-weight: 500;
  fill: #444;
  stroke: rgba(255, 255, 255, .6);
  stroke-width: 2px;
  paint-order: stroke;
}
.labels .mid { font-size: 14.5px; stroke: none; }
.labels .major { font-size: 15.5px; fill: #443430; stroke: none; }
.labels .pale { fill: #808c80; }
.labels .river { font-style: italic; fill: #7f95d0; font-size: 14px; }
.labels .place text { font-size: 18px; fill: #807c78; text-anchor: middle; }
.labels .place .big { font-size: 22px; }
.labels .station text { font-size: 15px; font-weight: bold; fill: #5062c0; }
.labels .park text { font-size: 23px; font-weight: bold; font-style: italic; fill: #359a50; }
.zoom {
  position: absolute;
  left: 16px;
  top: 15px;
  width: 49px;
  border: 2px solid rgba(0, 0, 0, .3);
  border-radius: 6px;
  background-clip: padding-box;
}
.zoom a { display: flex; align-items: center; justify-content: center; height: 44px; background: #fff; }
.zoom a:first-child { height: 45px; border-bottom: 1px solid #ccc; border-radius: 4px 4px 0 0; }
.zoom a:last-child { border-radius: 0 0 4px 4px; }
.zoom path { stroke: #000; stroke-width: 3.6; }
```
